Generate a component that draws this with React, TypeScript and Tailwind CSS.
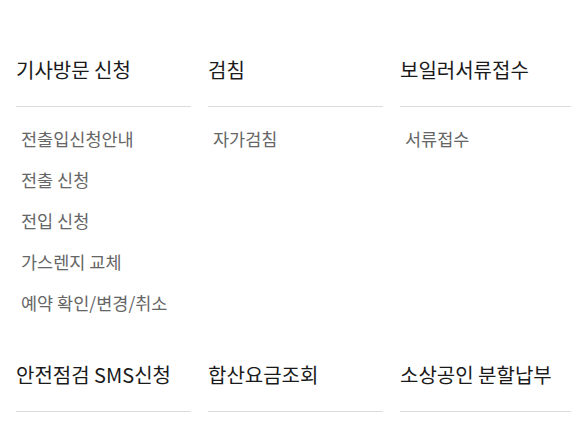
import React from "react";

type Group = {
  title: string;
  items: string[];
};

const rows: Group[][] = [
  [
    {
      title: "기사방문 신청",
      items: ["전출입신청안내", "전출 신청", "전입 신청", "가스렌지 교체", "예약 확인/변경/취소"],
    },
    { title: "검침", items: ["자가검침"] },
    { title: "보일러서류접수", items: ["서류접수"] },
  ],
  [
    { title: "안전점검 SMS신청", items: [] },
    { title: "합산요금조회", items: [] },
    { title: "소상공인 분할납부", items: [] },
  ],
];

const App = () => {
  return (
    <div
      className="w-[571px] h-[445px] overflow-hidden bg-white"
      style={{ fontFamily: '"Noto Sans CJK KR", "Noto Sans", sans-serif' }}
    >
      <div className="w-[600px] pl-4 pt-[56px] flex flex-col gap-[38px]">
        {rows.map((row, r) => (
          <div key={r} className="grid grid-cols-[175px_175px_175px] gap-x-[17px]">
            {row.map((group) => (
              <div key={group.title}>
                <h3 className="text-[20px] leading-[28px] text-[#1a1a1a] font-normal pb-[22px] border-b border-[#dcdcdc]">
                  {group.title}
                </h3>
                {group.items.length > 0 && (
                  <ul className="mt-[11px]">
                    {group.items.map((item) => (
                      <li key={item} className="pl-[5px] text-[17.5px] leading-[41px] text-[#666]">
                        {item}
                      </li>
                    ))}
                  </ul>
                )}
              </div>
            ))}
          </div>
        ))}
      </div>
    </div>
  );
};

export default App;
